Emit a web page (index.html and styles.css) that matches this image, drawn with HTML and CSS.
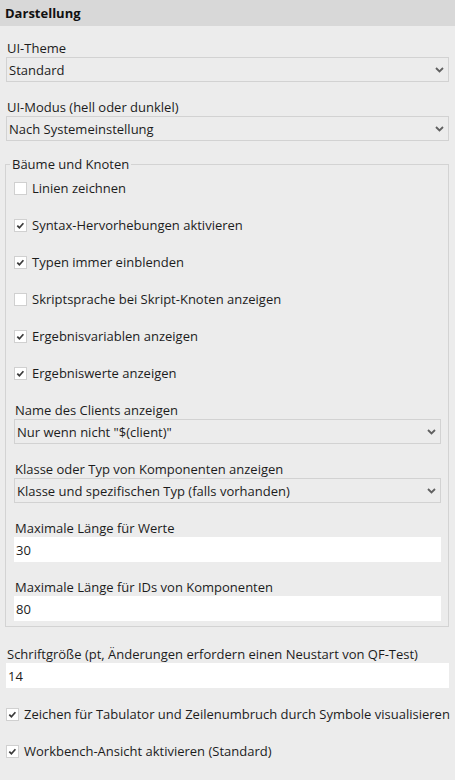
FILE: index.html
```html
<!DOCTYPE html>
<html lang="de">
<head>
<meta charset="utf-8">
<title>Darstellung</title>
<link rel="stylesheet" href="styles.css">
</head>
<body>
<div class="panel">
  <div class="header">Darstellung</div>
  <div class="content">
    <div class="field first">
      <div class="label">UI-Theme</div>
      <div class="combo"><span>Standard</span><svg class="chev" width="9" height="6" viewBox="0 0 9 6"><path d="M1 1 L4.5 4.5 L8 1" fill="none" stroke="#606060" stroke-width="1.8"/></svg></div>
    </div>
    <div class="field">
      <div class="label">UI-Modus (hell oder dunklel)</div>
      <div class="combo"><span>Nach Systemeinstellung</span><svg class="chev" width="9" height="6" viewBox="0 0 9 6"><path d="M1 1 L4.5 4.5 L8 1" fill="none" stroke="#606060" stroke-width="1.8"/></svg></div>
    </div>

    <fieldset class="group">
      <legend>Bäume und Knoten</legend>
      <div class="check first"><span class="box"></span><span>Linien zeichnen</span></div>
      <div class="check"><span class="box"><svg width="11" height="11" viewBox="0 0 11 11"><path d="M2.3 5.6 L4.4 7.7 L8.4 3.2" fill="none" stroke="#3a3a3a" stroke-width="1.7"/></svg></span><span>Syntax-Hervorhebungen aktivieren</span></div>
      <div class="check"><span class="box"><svg width="11" height="11" viewBox="0 0 11 11"><path d="M2.3 5.6 L4.4 7.7 L8.4 3.2" fill="none" stroke="#3a3a3a" stroke-width="1.7"/></svg></span><span>Typen immer einblenden</span></div>
      <div class="check"><span class="box"></span><span>Skriptsprache bei Skript-Knoten anzeigen</span></div>
      <div class="check"><span class="box"><svg width="11" height="11" viewBox="0 0 11 11"><path d="M2.3 5.6 L4.4 7.7 L8.4 3.2" fill="none" stroke="#3a3a3a" stroke-width="1.7"/></svg></span><span>Ergebnisvariablen anzeigen</span></div>
      <div class="check"><span class="box"><svg width="11" height="11" viewBox="0 0 11 11"><path d="M2.3 5.6 L4.4 7.7 L8.4 3.2" fill="none" stroke="#3a3a3a" stroke-width="1.7"/></svg></span><span>Ergebniswerte anzeigen</span></div>

      <div class="field after-check">
        <div class="label">Name des Clients anzeigen</div>
        <div class="combo"><span>Nur wenn nicht "$(client)"</span><svg class="chev" width="9" height="6" viewBox="0 0 9 6"><path d="M1 1 L4.5 4.5 L8 1" fill="none" stroke="#606060" stroke-width="1.8"/></svg></div>
      </div>
      <div class="field">
        <div class="label">Klasse oder Typ von Komponenten anzeigen</div>
        <div class="combo"><span>Klasse und spezifischen Typ (falls vorhanden)</span><svg class="chev" width="9" height="6" viewBox="0 0 9 6"><path d="M1 1 L4.5 4.5 L8 1" fill="none" stroke="#606060" stroke-width="1.8"/></svg></div>
      </div>
      <div class="field">
        <div class="label">Maximale Länge für Werte</div>
        <input class="input" type="text" value="30">
      </div>
      <div class="field">
        <div class="label">Maximale Länge für IDs von Komponenten</div>
        <input class="input" type="text" value="80">
      </div>
    </fieldset>

    <div class="field after-group">
      <div class="label">Schriftgröße (pt, Änderungen erfordern einen Neustart von QF-Test)</div>
      <input class="input" type="text" value="14">
    </div>
    <div class="check after-input"><span class="box"><svg width="11" height="11" viewBox="0 0 11 11"><path d="M2.3 5.6 L4.4 7.7 L8.4 3.2" fill="none" stroke="#3a3a3a" stroke-width="1.7"/></svg></span><span>Zeichen für Tabulator und Zeilenumbruch durch Symbole visualisieren</span></div>
    <div class="check"><span class="box"><svg width="11" height="11" viewBox="0 0 11 11"><path d="M2.3 5.6 L4.4 7.7 L8.4 3.2" fill="none" stroke="#3a3a3a" stroke-width="1.7"/></svg></span><span>Workbench-Ansicht aktivieren (Standard)</span></div>
  </div>
</div>
</body>
</html>
```
FILE: styles.css
```css
html, body {
  margin: 0;
  padding: 0;
  background: #ececec;
}

body {
  font-family: "Open Sans", "Noto Sans", sans-serif;
  font-size: 13px;
  color: #1c1c1c;
  width: 455px;
  height: 780px;
  overflow: hidden;
}

.header {
  height: 26px;
  line-height: 27px;
  background: #d8d8d8;
  font-weight: 700;
  padding-left: 5px;
  color: #111;
}

.content {
  padding: 0 6px;
}

.field {
  margin-top: 16px;
}

.field.first {
  margin-top: 13px;
}

.field.after-check {
  margin-top: 19px;
}

.field.after-group {
  margin-top: 18px;
}

.label {
  height: 18px;
  line-height: 18px;
  padding-left: 1px;
  white-space: nowrap;
}

.combo {
  height: 25px;
  box-sizing: border-box;
  border: 1px solid #d2d2d2;
  display: flex;
  align-items: center;
  justify-content: space-between;
  padding: 0 4px 0 2px;
  white-space: nowrap;
}

.chev {
  flex: none;
  margin-top: 1px;
}

.input {
  display: block;
  width: 100%;
  height: 25px;
  box-sizing: border-box;
  margin: 0;
  border: 0;
  outline: none;
  background: #fff;
  padding: 0 2px;
  font: inherit;
  color: inherit;
}

.group {
  margin: 14px 0 0 -1px;
  padding: 6px 7px 5px 8px;
  border: 1px solid #d3d3d3;
  min-width: 0;
}

.group legend {
  margin-left: -4px;
  padding: 0 2px;
  line-height: 18px;
}

.check {
  display: flex;
  align-items: center;
  gap: 5px;
  height: 18px;
  margin-top: 19px;
  white-space: nowrap;
}

.check.first {
  margin-top: 0;
}

.check.after-input {
  margin-top: 17px;
}

.box {
  flex: none;
  width: 13px;
  height: 13px;
  box-sizing: border-box;
  border: 1px solid #d0d0d0;
  background: #fff;
  display: flex;
  align-items: center;
  justify-content: center;
}
```
